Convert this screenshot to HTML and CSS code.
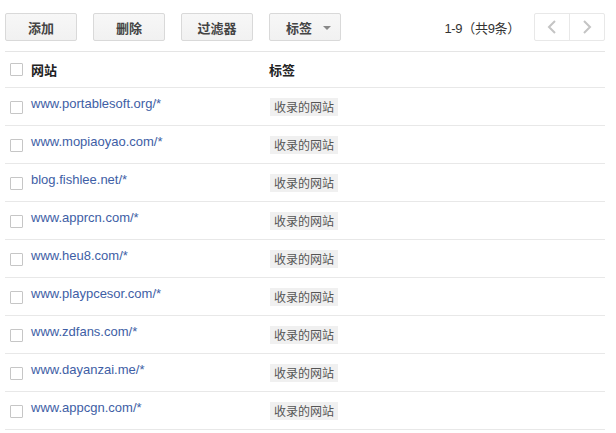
FILE: index.html
```html
<!DOCTYPE html>
<html lang="zh-CN">
<head>
    <meta charset="UTF-8">
    <title>网站列表</title>
    <link rel="stylesheet" href="styles.css">
</head>
<body>
    <div class="container">
        <div class="toolbar">
            <button class="btn">添加</button>
            <button class="btn">删除</button>
            <button class="btn">过滤器</button>
            <button class="btn btn-drop">标签 <span class="caret"></span></button>
            <div class="pager">
                <span class="count">1-9（共9条）</span>
                <div class="pager-btns">
                    <span class="pg">
                        <svg width="10" height="14" viewBox="0 0 10 14"><polyline points="8,1 2,7 8,13" fill="none" stroke="#c4c4c4" stroke-width="2"/></svg>
                    </span>
                    <span class="pg">
                        <svg width="10" height="14" viewBox="0 0 10 14"><polyline points="2,1 8,7 2,13" fill="none" stroke="#c4c4c4" stroke-width="2"/></svg>
                    </span>
                </div>
            </div>
        </div>

        <div class="row head">
            <span class="check"></span>
            <span class="col-site">网站</span>
            <span class="col-tag">标签</span>
        </div>

        <div class="row">
            <span class="check"></span>
            <a class="col-site link" href="#">www.portablesoft.org/*</a>
            <span class="col-tag"><span class="tag">收录的网站</span></span>
        </div>
        <div class="row">
            <span class="check"></span>
            <a class="col-site link" href="#">www.mopiaoyao.com/*</a>
            <span class="col-tag"><span class="tag">收录的网站</span></span>
        </div>
        <div class="row">
            <span class="check"></span>
            <a class="col-site link" href="#">blog.fishlee.net/*</a>
            <span class="col-tag"><span class="tag">收录的网站</span></span>
        </div>
        <div class="row">
            <span class="check"></span>
            <a class="col-site link" href="#">www.apprcn.com/*</a>
            <span class="col-tag"><span class="tag">收录的网站</span></span>
        </div>
        <div class="row">
            <span class="check"></span>
            <a class="col-site link" href="#">www.heu8.com/*</a>
            <span class="col-tag"><span class="tag">收录的网站</span></span>
        </div>
        <div class="row">
            <span class="check"></span>
            <a class="col-site link" href="#">www.playpcesor.com/*</a>
            <span class="col-tag"><span class="tag">收录的网站</span></span>
        </div>
        <div class="row">
            <span class="check"></span>
            <a class="col-site link" href="#">www.zdfans.com/*</a>
            <span class="col-tag"><span class="tag">收录的网站</span></span>
        </div>
        <div class="row">
            <span class="check"></span>
            <a class="col-site link" href="#">www.dayanzai.me/*</a>
            <span class="col-tag"><span class="tag">收录的网站</span></span>
        </div>
        <div class="row">
            <span class="check"></span>
            <a class="col-site link" href="#">www.appcgn.com/*</a>
            <span class="col-tag"><span class="tag">收录的网站</span></span>
        </div>
    </div>
</body>
</html>
```

FILE: styles.css
```css
body {
    margin: 0;
    background-color: #fff;
    font-family: "Liberation Sans", Arial, "Noto Sans CJK SC", sans-serif;
    font-size: 13px;
    color: #333;
}
.container {
    width: 600px;
    margin-left: 5px;
}
.toolbar {
    display: flex;
    align-items: center;
    gap: 16px;
    padding-top: 13px;
    padding-bottom: 10px;
    border-bottom: 1px solid #e5e5e5;
}
.btn {
    width: 72px;
    height: 28px;
    padding: 0;
    border: 1px solid #d9d9d9;
    border-radius: 2px;
    background: linear-gradient(#f7f7f7, #f1f1f1);
    font-family: "Noto Sans CJK SC", sans-serif;
    font-size: 13px;
    font-weight: bold;
    color: #444;
    cursor: pointer;
}
.btn-drop {
    position: relative;
    text-align: left;
    padding-left: 16px;
}
.caret {
    position: absolute;
    right: 9px;
    top: 12px;
    width: 0;
    height: 0;
    border-left: 4px solid transparent;
    border-right: 4px solid transparent;
    border-top: 4px solid #888;
}
.pager {
    margin-left: auto;
    display: flex;
    align-items: center;
    gap: 14px;
}
.count {
    color: #333;
    letter-spacing: -0.3px;
}
.pager-btns {
    display: flex;
    border: 1px solid #e8e8e8;
    border-radius: 2px;
    height: 26px;
}
.pg {
    width: 34px;
    display: flex;
    align-items: center;
    justify-content: center;
}
.pg + .pg {
    border-left: 1px solid #e8e8e8;
}
.row {
    display: flex;
    align-items: flex-start;
    height: 37px;
    border-bottom: 1px solid #e8e8e8;
}
.check {
    width: 11px;
    height: 11px;
    margin: 13px 8px 0 5px;
    border: 1px solid #c6c6c6;
    border-radius: 1px;
    background-color: #fff;
    flex-shrink: 0;
}
.col-site {
    width: 238px;
    line-height: 18px;
    padding-top: 7px;
}
.col-tag {
    flex: 1;
}
.link {
    color: #3e5ea5;
    text-decoration: none;
}
.tag {
    display: inline-block;
    margin-top: 10px;
    margin-left: 1px;
    padding: 0 4px;
    height: 18px;
    line-height: 18px;
    background-color: #f0f0f0;
    color: #555;
    font-family: "Noto Sans CJK SC", sans-serif;
    font-size: 12px;
}
.head {
    height: 35px;
    align-items: center;
}
.head .check {
    margin-top: 0;
}
.head .col-site,
.head .col-tag {
    padding-top: 0;
    font-family: "Noto Sans CJK SC", sans-serif;
    font-weight: bold;
    color: #222;
}
```
